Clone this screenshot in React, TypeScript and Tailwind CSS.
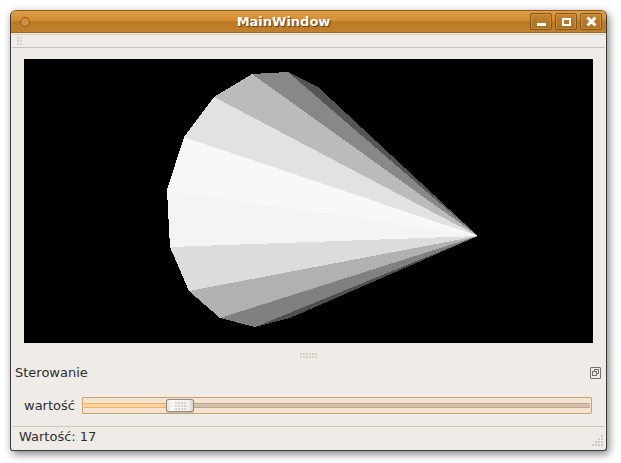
import React from 'react';

const apex = '478,236';

// rim of the cone, top right round to bottom right, with the shade of each facet
const facets: { a: string; b: string; fill: string }[] = [
  { a: '288,72', b: '318,87', fill: '#555555' },
  { a: '252,74', b: '288,72', fill: '#888888' },
  { a: '214,97', b: '252,74', fill: '#bbbbbb' },
  { a: '184,137', b: '214,97', fill: '#e2e2e2' },
  { a: '167,190', b: '184,137', fill: '#f8f8f8' },
  { a: '170,247', b: '167,190', fill: '#f4f4f4' },
  { a: '189,291', b: '170,247', fill: '#dcdcdc' },
  { a: '220,318', b: '189,291', fill: '#b1b1b1' },
  { a: '255,327', b: '220,318', fill: '#808080' },
  { a: '290,318', b: '255,327', fill: '#4f4f4f' },
];

const Dots: React.FC<{ cols: number; rows: number; className?: string }> = ({ cols, rows, className }) => (
  <div className={`grid gap-px ${className ?? ''}`} style={{ gridTemplateColumns: `repeat(${cols}, 2px)` }}>
    {Array.from({ length: cols * rows }).map((_, i) => (
      <div key={i} className="w-[2px] h-[2px] bg-[#d6d0c8]" />
    ))}
  </div>
);

const TitleButton: React.FC<{ children: React.ReactNode }> = ({ children }) => (
  <div className="w-[22px] h-[17px] rounded-[2px] border border-[#865518] bg-gradient-to-b from-[#c28431] to-[#a96f22] shadow-[inset_0_0_0_1px_rgba(235,180,105,0.4)] flex items-center justify-center">
    {children}
  </div>
);

const App: React.FC = () => {
  return (
    <div className="w-[621px] h-[463px] bg-white pt-[10px] pl-[10px] overflow-hidden font-['DejaVu_Sans',sans-serif] text-[13px] text-[#2e2e2e]">
      <div className="w-[597px] h-[441px] flex flex-col rounded-t-[6px] rounded-b-[3px] border border-[#3c3b37] border-t-[#8a5c20] bg-[#efebe6] shadow-[2px_3px_8px_rgba(0,0,0,0.5)]">
        {/* Title bar */}
        <div className="relative h-[22px] shrink-0 flex items-center pl-[9px] pr-[4px] rounded-t-[5px] bg-[linear-gradient(#e09c42_0%,#d48e36_45%,#bb7a26_50%,#c07f2b_100%)] border-b border-[#9a6a2a]">
          <div className="w-[10px] h-[10px] rounded-full border border-[#8f5e20] bg-[#d18f3f]" />
          <span className="absolute left-0 right-[50px] top-[1px] text-center text-[13px] font-bold text-white [text-shadow:1px_1px_1px_#5c3a10]">
            MainWindow
          </span>
          <div className="ml-auto flex gap-[3px]">
            <TitleButton>
              <div className="w-[9px] h-[3px] mt-[6px] bg-white" />
            </TitleButton>
            <TitleButton>
              <div className="w-[9px] h-[8px] border-2 border-white" />
            </TitleButton>
            <TitleButton>
              <svg width="11" height="11" viewBox="0 0 11 11">
                <path d="M1.5 1.5 L9.5 9.5 M9.5 1.5 L1.5 9.5" stroke="white" strokeWidth="3" />
              </svg>
            </TitleButton>
          </div>
        </div>

        {/* Toolbar */}
        <div className="h-[14px] shrink-0 mt-[1px] mx-[1px] border-t border-[#d8d2ca] border-b border-b-[#c9c1b8] flex items-center pl-[5px]">
          <Dots cols={2} rows={3} className="gap-x-[1px] gap-y-[1px]" />
        </div>

        {/* Canvas */}
        <div className="mt-[11px] ml-[13px] w-[569px] h-[284px] shrink-0 bg-black">
          <svg width="569" height="284" viewBox="24 59 569 284" shapeRendering="crispEdges">
            {facets.map((f) => (
              <polygon key={f.a} points={`${apex} ${f.a} ${f.b}`} fill={f.fill} />
            ))}
          </svg>
        </div>

        {/* Splitter handle */}
        <div className="h-[24px] shrink-0 flex items-center justify-center pr-[1px]">
          <Dots cols={6} rows={2} className="gap-x-px gap-y-px" />
        </div>

        {/* Dock title */}
        <div className="h-[11px] shrink-0 flex items-center justify-between pl-[4px] pr-[5px]">
          <span className="leading-none -mt-px">Sterowanie</span>
          <div className="relative w-[11px] h-[12px] rounded-[1px] border border-[#77736c]">
            <div className="absolute left-[3px] top-[1px] w-[5px] h-[5px] border border-[#77736c]" />
            <div className="absolute left-[1px] top-[3px] w-[5px] h-[5px] border border-[#77736c] bg-[#efebe6]" />
          </div>
        </div>

        {/* Slider row */}
        <div className="mt-[19px] h-[17px] shrink-0 flex items-center pl-[13px]">
          <span className="w-[58px] leading-none">wartość</span>
          <div className="relative w-[510px] h-[17px] rounded-[1px] border border-[#c9a36b] bg-[#f3e3d0] flex items-center px-[1px]">
            <div className="flex-1 h-[5px] bg-[#d4c1ac] border-y border-[#bfa68c] flex">
              <div className="w-[84px] -my-px bg-[#fcd59c] border-y border-[#eeb066]" />
            </div>
            <div className="absolute left-[83px] top-[1px] w-[28px] h-[13px] rounded-[2px] border border-[#8e8a83] bg-[linear-gradient(90deg,#e6e2dc,#f9f8f6_20%,#f4f2ef_80%,#d9d4cd)] flex items-center justify-center shadow-[0_1px_1px_rgba(0,0,0,0.2)]">
              <Dots cols={4} rows={3} className="gap-x-px gap-y-px" />
            </div>
          </div>
        </div>

        {/* Status bar */}
        <div className="relative mt-[12px] mx-[1px] flex-1 border-t border-[#cfc8bf] flex items-center pl-[7px] pb-[4px]">
          <span className="leading-none">Wartość: 17</span>
          <svg className="absolute right-[2px] bottom-[3px]" width="13" height="13" viewBox="0 0 13 13">
            {[[11, 1], [11, 4], [8, 4], [11, 7], [8, 7], [5, 7], [11, 10], [8, 10], [5, 10], [2, 10]].map(([x, y]) => (
              <rect key={`${x}-${y}`} x={x} y={y} width="2" height="2" fill="#d0c9bf" />
            ))}
          </svg>
        </div>
      </div>
    </div>
  );
};

export default App;
